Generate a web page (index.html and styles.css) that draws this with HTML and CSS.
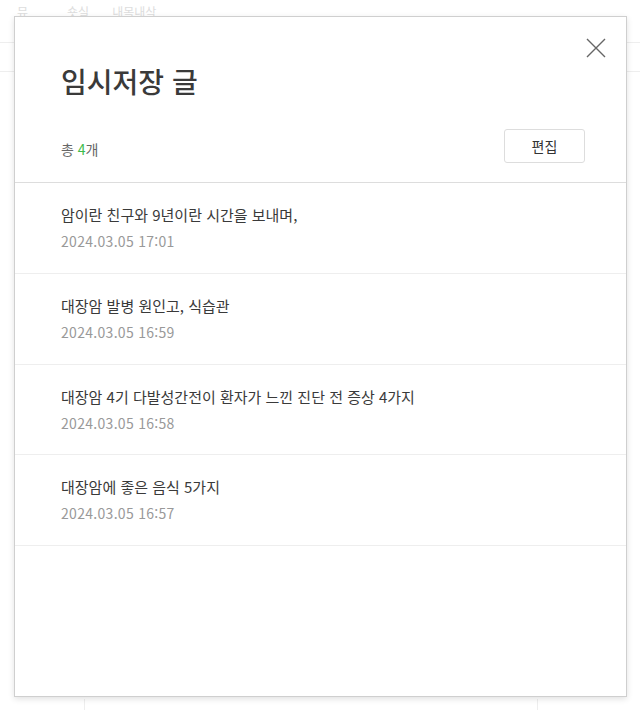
FILE: index.html
```html
<!DOCTYPE html>
<html lang="ko">
<head>
    <meta charset="UTF-8">
    <meta name="viewport" content="width=device-width, initial-scale=1.0">
    <title>임시저장 글</title>
    <link rel="stylesheet" href="styles.css">
</head>
<body>
    <div class="page">
        <div class="page-tabs">
            <span class="tab-a">뮤</span>
            <span class="tab-b">숏실</span>
            <span>내목내삭</span>
        </div>
        <div class="page-line"></div>
        <div class="page-line second"></div>
        <div class="page-cols">
            <div class="page-col"></div>
            <div class="page-col"></div>
        </div>
    </div>

    <div class="modal">
        <button class="close" aria-label="닫기">
            <svg width="20" height="20" viewBox="0 0 20 20">
                <path d="M1 1 L19 19 M19 1 L1 19" stroke="#666" stroke-width="1.4" fill="none"/>
            </svg>
        </button>

        <div class="modal-head">
            <h1 class="title">임시저장 글</h1>
            <div class="toolbar">
                <div class="count">총 <em>4</em>개</div>
                <button class="edit-btn">편집</button>
            </div>
        </div>

        <ul class="post-list">
            <li class="post">
                <div class="post-title">암이란 친구와 9년이란 시간을 보내며,</div>
                <div class="post-date">2024.03.05 17:01</div>
            </li>
            <li class="post">
                <div class="post-title">대장암 발병 원인고, 식습관</div>
                <div class="post-date">2024.03.05 16:59</div>
            </li>
            <li class="post">
                <div class="post-title">대장암 4기 다발성간전이 환자가 느낀 진단 전 증상 4가지</div>
                <div class="post-date">2024.03.05 16:58</div>
            </li>
            <li class="post">
                <div class="post-title">대장암에 좋은 음식 5가지</div>
                <div class="post-date">2024.03.05 16:57</div>
            </li>
        </ul>
    </div>
</body>
</html>
```

FILE: styles.css
```css
body {
    margin: 0;
    font-family: "Noto Sans CJK KR", "Noto Sans", sans-serif;
    background: #fff;
    color: #333;
    width: 640px;
    height: 710px;
    overflow: hidden;
    position: relative;
}

/* 뒤쪽 흐린 페이지 */
.page {
    height: 710px;
}

.page-tabs {
    display: flex;
    padding: 3px 0 0 17px;
    font-size: 12px;
    line-height: 18px;
    color: #ddd;
}

.tab-a {
    margin-right: 39px;
}

.tab-b {
    margin-right: 23px;
}

.page-line {
    height: 1px;
    background: #eee;
    margin-top: 21px;
}

.page-line.second {
    margin-top: 28px;
}

.page-cols {
    display: flex;
    justify-content: space-between;
    padding: 627px 102px 0 84px;
}

.page-col {
    width: 1px;
    height: 14px;
    background: #eee;
}

/* 모달 */
.modal {
    position: absolute;
    left: 14px;
    top: 16px;
    width: 611px;
    height: 679px;
    background: #fff;
    border: 1px solid #cfcfcf;
    box-shadow: 0 2px 6px rgba(0, 0, 0, 0.12);
    display: flex;
    flex-direction: column;
}

.close {
    position: absolute;
    top: 21px;
    right: 20px;
    width: 20px;
    height: 20px;
    padding: 0;
    border: 0;
    background: none;
    cursor: pointer;
}

.close svg {
    display: block;
}

.modal-head {
    padding: 47px 41px 19px 46px;
    border-bottom: 1px solid #ddd;
}

.title {
    margin: 0 0 31px;
    font-size: 28px;
    line-height: 34px;
    font-weight: 500;
    color: #3a3a3a;
}

.toolbar {
    display: flex;
    justify-content: space-between;
    align-items: center;
}

.count {
    font-size: 14px;
    color: #666;
    padding-top: 5px;
}

.count em {
    font-style: normal;
    color: #3dbb4c;
}

.edit-btn {
    width: 81px;
    height: 34px;
    border: 1px solid #ddd;
    border-radius: 3px;
    background: #fff;
    font-family: inherit;
    font-size: 14px;
    color: #333;
    cursor: pointer;
}

.post-list {
    list-style: none;
    margin: 0;
    padding: 0;
}

.post {
    padding: 21px 46px 20.8px;
    border-bottom: 1px solid #eee;
}

.post-title {
    font-size: 15px;
    line-height: 22px;
    color: #3a3a3a;
}

.post-date {
    margin-top: 4px;
    font-size: 14px;
    line-height: 22px;
    letter-spacing: 0.3px;
    color: #999;
}
```
